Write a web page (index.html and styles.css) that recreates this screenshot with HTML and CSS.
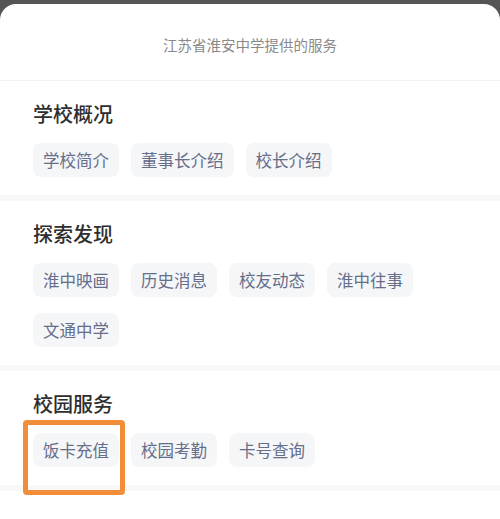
FILE: index.html
```html
<!DOCTYPE html>
<html lang="zh-CN">
<head>
    <meta charset="UTF-8">
    <meta name="viewport" content="width=device-width, initial-scale=1.0">
    <title>服务</title>
    <link rel="stylesheet" href="styles.css">
</head>
<body>
    <div class="sheet">
        <div class="sheet-title">江苏省淮安中学提供的服务</div>

        <div class="section">
            <h3>学校概况</h3>
            <div class="chips">
                <span class="chip">学校简介</span>
                <span class="chip">董事长介绍</span>
                <span class="chip">校长介绍</span>
            </div>
        </div>

        <div class="section">
            <h3>探索发现</h3>
            <div class="chips">
                <span class="chip">淮中映画</span>
                <span class="chip">历史消息</span>
                <span class="chip">校友动态</span>
                <span class="chip">淮中往事</span>
                <span class="chip">文通中学</span>
            </div>
        </div>

        <div class="section">
            <h3>校园服务</h3>
            <div class="chips">
                <span class="chip marked">饭卡充值</span>
                <span class="chip">校园考勤</span>
                <span class="chip">卡号查询</span>
            </div>
        </div>
    </div>
</body>
</html>
```

FILE: styles.css
```css
body { margin: 0; background: #555; font-family: "Noto Sans CJK SC", "Noto Sans", sans-serif; overflow: hidden; }
.sheet { margin-top: 4px; height: 515px; background: #fff; border-radius: 16px 16px 0 0; }
.sheet-title { padding: 29px 0 23px; line-height: 24px; text-align: center; font-size: 14.5px; color: #8a8a8a; border-bottom: 1px solid #f3f3f3; }
.section { padding: 19px 33px 18px; border-bottom: 6px solid #f8f8f9; }
.section h3 { margin: 0 0 15px; font-size: 20px; line-height: 28px; font-weight: 500; color: #2e2e2e; }
.chips { display: flex; flex-wrap: wrap; gap: 16px 12px; }
.chip { position: relative; height: 34px; line-height: 34px; padding: 0 10px; font-size: 16.5px; color: #666e8a; background: #f5f6f8; border-radius: 8px; }
.marked::after { content: ""; position: absolute; left: -10px; top: -13px; width: 102px; height: 75px; box-sizing: border-box; border: 5px solid #f28d3a; border-radius: 4px; }
```
